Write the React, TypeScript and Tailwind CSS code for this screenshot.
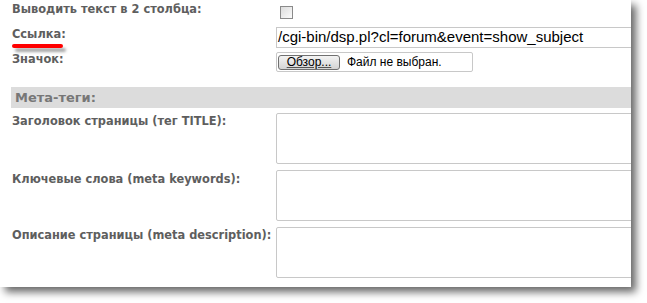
export default function App() {
  const label =
    "w-[264px] shrink-0 text-[11.4px] leading-[13px] font-bold text-[#5e5e5e] [font-family:'DejaVu_Sans',sans-serif]";
  const area =
    "h-[51px] flex-1 rounded-[2px] border border-[#c8c8c8] bg-white -mr-2";

  return (
    <div className="h-[303px] w-[647px] overflow-hidden bg-white">
      <div className="h-[287px] w-[631px] overflow-hidden bg-white pl-[12px] shadow-[5px_5px_8px_rgba(0,0,0,0.6)]">
        {/* checkbox row */}
        <div className="flex h-[26px]">
          <div className={`${label} pt-[3px]`}>Выводить текст в 2 столбца:</div>
          <div className="ml-[4px] mt-[6px] h-[13px] w-[13px] border border-[#8a8a8a] bg-gradient-to-br from-[#dcdcdc] to-[#fbfbfb]" />
        </div>

        {/* link row */}
        <div className="flex h-[26px]">
          <div className={`${label} pt-[2px]`}>
            <div>Ссылка:</div>
            <div className="mt-[3px] h-[4px] w-[51px] rounded-full bg-[#ff0000] shadow-[3px_4px_3px_rgba(0,0,0,0.35)]" />
          </div>
          <div className="-mr-2 mt-[1px] flex h-[21px] flex-1 items-center border border-[#c8c8c8] pl-[1px] text-[15px] text-black [font-family:'Liberation_Sans',sans-serif]">
            /cgi-bin/dsp.pl?cl=forum&amp;event=show_subject
          </div>
        </div>

        {/* file row */}
        <div className="flex h-[20px]">
          <div className={`${label} pt-[1px]`}>Значок:</div>
          <div className="flex h-[20px] w-[197px] items-center rounded-[2px] border border-[#c8c8c8] pl-[1px]">
            <div className="flex h-[15px] w-[62px] items-center justify-center rounded-[3px] border border-[#707070] bg-gradient-to-b from-[#f4f4f4] to-[#d4d4d4] text-[12px] leading-none text-black underline decoration-[#555] [font-family:'Liberation_Sans',sans-serif]">
              Обзор...
            </div>
            <span className="ml-[7px] text-[12px] text-black [font-family:'Liberation_Sans',sans-serif]">
              Файл не выбран.
            </span>
          </div>
        </div>

        {/* section header */}
        <div className="-ml-[1px] mt-[15px] h-[21px] bg-[#dcdcdc] pl-[4px] text-[13px] leading-[21px] font-bold text-[#777] [font-family:'DejaVu_Sans',sans-serif]">
          Мета-теги:
        </div>

        <div className="mt-[5px] flex">
          <div className={`${label} pt-[2px]`}>Заголовок страницы (тег TITLE):</div>
          <div className={area} />
        </div>
        <div className="mt-[6px] flex">
          <div className={`${label} pt-[3px]`}>Ключевые слова (meta keywords):</div>
          <div className={area} />
        </div>
        <div className="mt-[6px] flex">
          <div className={`${label} pt-[2px]`}>Описание страницы (meta description):</div>
          <div className={area} />
        </div>
      </div>
    </div>
  );
}
